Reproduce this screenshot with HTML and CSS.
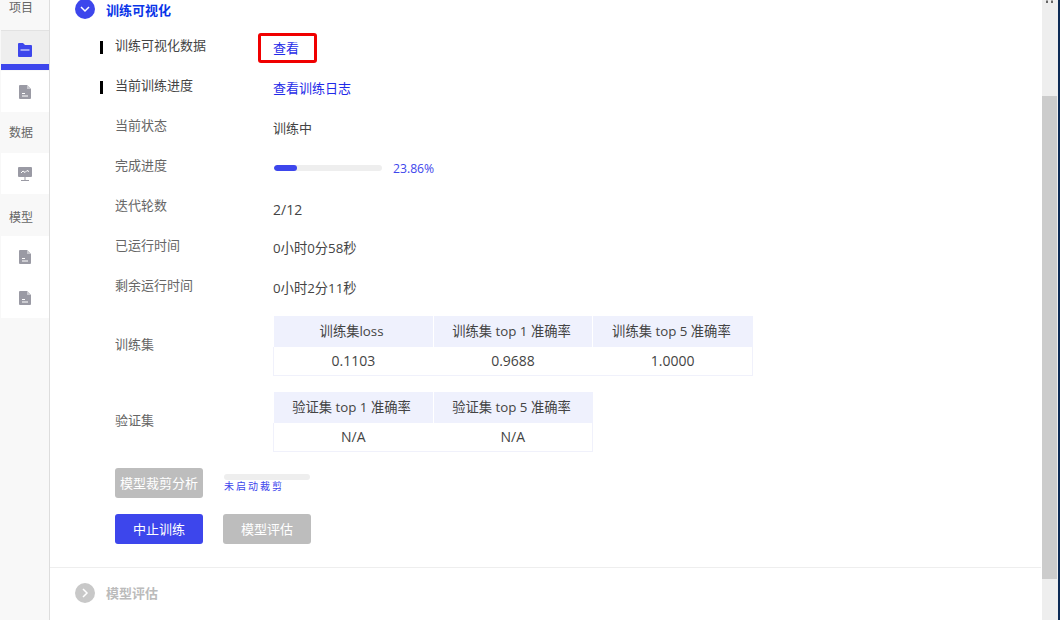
FILE: index.html
```html
<!DOCTYPE html>
<html lang="zh-CN">
<head>
    <meta charset="UTF-8">
    <meta name="viewport" content="width=device-width, initial-scale=1.0">
    <title>训练可视化</title>
    <link rel="stylesheet" href="styles.css">
</head>
<body>
    <div class="app">
        <div class="sidebar">
            <div class="side-label side-first">项目</div>
            <div class="side-item active">
                <svg width="14" height="14" viewBox="0 0 14 14"><path d="M0 1a1 1 0 0 1 1-1h4l2 2h6a1 1 0 0 1 1 1v10a1 1 0 0 1-1 1H1a1 1 0 0 1-1-1z" fill="#3d46ec"/><rect x="2.500" y="6.500" width="9" height="1" fill="#fff"/></svg>
            </div>
            <div class="side-item">
                <svg width="12" height="14" viewBox="0 0 12 14"><path d="M1 0h7l4 4v9a1 1 0 0 1-1 1H1a1 1 0 0 1-1-1V1a1 1 0 0 1 1-1z" fill="#9a9aa4"/><path d="M8 0l4 4H8z" fill="#c9c9cf"/><rect x="3" y="8" width="3" height="1" fill="#fff"/><rect x="3" y="10.500" width="6" height="1" fill="#fff"/></svg>
            </div>
            <div class="side-label">数据</div>
            <div class="side-item">
                <svg width="14" height="14" viewBox="0 0 14 14"><rect x="0" y="0" width="14" height="10" rx="1" fill="#9a9aa4"/><path d="M3 6l2-2 2 1.500 2-2 2 1" fill="none" stroke="#fff" stroke-width="1"/><rect x="6.500" y="10" width="1" height="3" fill="#9a9aa4"/><rect x="3" y="13" width="8" height="1" fill="#9a9aa4"/></svg>
            </div>
            <div class="side-label side-model">模型</div>
            <div class="side-item">
                <svg width="12" height="14" viewBox="0 0 12 14"><path d="M1 0h7l4 4v9a1 1 0 0 1-1 1H1a1 1 0 0 1-1-1V1a1 1 0 0 1 1-1z" fill="#9a9aa4"/><path d="M8 0l4 4H8z" fill="#c9c9cf"/><rect x="3" y="8" width="3" height="1" fill="#fff"/><rect x="3" y="10.500" width="6" height="1" fill="#fff"/></svg>
            </div>
            <div class="side-item">
                <svg width="12" height="14" viewBox="0 0 12 14"><path d="M1 0h7l4 4v9a1 1 0 0 1-1 1H1a1 1 0 0 1-1-1V1a1 1 0 0 1 1-1z" fill="#9a9aa4"/><path d="M8 0l4 4H8z" fill="#c9c9cf"/><rect x="3" y="8" width="3" height="1" fill="#fff"/><rect x="3" y="10.500" width="6" height="1" fill="#fff"/></svg>
            </div>
        </div>

        <div class="main">
            <div class="section-head">
                <span class="circle">
                    <svg width="12" height="12" viewBox="0 0 12 12"><path d="M2 4l4 4 4-4" fill="none" stroke="#fff" stroke-width="1.500"/></svg>
                </span>
                <span class="section-title">训练可视化</span>
            </div>

            <div class="row">
                <div class="label mark">训练可视化数据</div>
                <div class="value"><a class="link boxed">查看</a></div>
            </div>
            <div class="row">
                <div class="label mark">当前训练进度</div>
                <div class="value"><a class="link">查看训练日志</a></div>
            </div>
            <div class="row">
                <div class="label">当前状态</div>
                <div class="value">训练中</div>
            </div>
            <div class="row">
                <div class="label">完成进度</div>
                <div class="value progress-wrap">
                    <div class="progress"><div class="progress-bar" style="width: 23px"></div></div>
                    <span class="percent">23.86%</span>
                </div>
            </div>
            <div class="row">
                <div class="label">迭代轮数</div>
                <div class="value value-num">2/12</div>
            </div>
            <div class="row">
                <div class="label">已运行时间</div>
                <div class="value value-time">0小时0分58秒</div>
            </div>
            <div class="row">
                <div class="label">剩余运行时间</div>
                <div class="value value-time">0小时2分11秒</div>
            </div>

            <div class="row row-table">
                <div class="label">训练集</div>
                <table class="table-3">
                    <tr><th>训练集loss</th><th>训练集 top 1 准确率</th><th>训练集 top 5 准确率</th></tr>
                    <tr><td>0.1103</td><td>0.9688</td><td>1.0000</td></tr>
                </table>
            </div>
            <div class="row row-table">
                <div class="label">验证集</div>
                <table class="table-2">
                    <tr><th>验证集 top 1 准确率</th><th>验证集 top 5 准确率</th></tr>
                    <tr><td>N/A</td><td>N/A</td></tr>
                </table>
            </div>

            <div class="actions">
                <button class="btn btn-off">模型裁剪分析</button>
                <div class="prune">
                    <div class="prune-bar"></div>
                    <div class="prune-text">未启动裁剪</div>
                </div>
            </div>
            <div class="actions actions-last">
                <button class="btn btn-primary">中止训练</button>
                <button class="btn btn-off">模型评估</button>
            </div>

            <div class="section-head section-off">
                <span class="circle">
                    <svg width="12" height="12" viewBox="0 0 12 12"><path d="M4 2l4 4-4 4" fill="none" stroke="#fff" stroke-width="1.500"/></svg>
                </span>
                <span class="section-title">模型评估</span>
            </div>
        </div>

        <div class="scrollbar">
            <svg class="scroll-arrow" width="7" height="3" viewBox="0 0 7 3"><path d="M0 3V1l1-1 1 1v2zM5 3V1l1-1 1 1v2z" fill="#666"/></svg>
            <div class="scroll-thumb"></div>
        </div>
        <div class="edge"></div>
    </div>
</body>
</html>
```

FILE: styles.css
```css
body {
    margin: 0;
    font-family: "Open Sans", "Noto Sans CJK SC", sans-serif;
    font-size: 13px;
    color: #444;
    background: #fff;
}

.app {
    display: flex;
    height: 620px;
    overflow: hidden;
}

/* left nav */
.sidebar {
    width: 49px;
    flex-shrink: 0;
    background: #f8f8f8;
    border-right: 1px solid #ddd;
}

.side-label {
    height: 41px;
    line-height: 42px;
    padding-left: 9px;
    font-size: 12px;
    color: #666;
}

.side-first {
    height: 30px;
    line-height: 16px;
}

.side-model {
    height: 42px;
    line-height: 48px;
}

.side-item {
    height: 41px;
    background: #fff;
    margin-left: 1px;
    display: flex;
    align-items: center;
    justify-content: center;
    box-sizing: border-box;
}

.side-item.active {
    background: #eee;
    height: 40px;
    margin-bottom: 1px;
    padding-top: 5px;
    border-bottom: 6px solid #3d46ec;
    border-top: 1px solid #e2e2e2;
}

/* main panel */
.main {
    flex: 1;
    min-width: 0;
}

.section-head {
    display: flex;
    align-items: center;
    gap: 11px;
    height: 20px;
    margin-top: -1px;
    padding-left: 25px;
}

.circle {
    width: 20px;
    height: 20px;
    border-radius: 50%;
    background: #3d46ec;
    display: flex;
    align-items: center;
    justify-content: center;
}

.section-title {
    font-size: 13px;
    font-weight: 700;
    color: #0a35e8;
}

.section-off {
    border-top: 1px solid #eee;
    height: 50px;
    margin-top: 0;
    margin-right: 1px;
}

.section-off .circle {
    background: #c8c8c8;
}

.section-off .section-title {
    margin-top: -2px;
    color: #bbb;
}

.row {
    display: flex;
    height: 40px;
    padding-left: 50px;
}

.row:nth-child(2) {
    margin-top: 17px;
}

.label {
    width: 173px;
    flex-shrink: 0;
    display: flex;
    gap: 12px;
    margin-top: -1px;
    line-height: 20px;
    color: #666;
}

.label::before {
    content: "";
    width: 3px;
    height: 13px;
    margin-top: 6px;
}

.label.mark {
    color: #444;
}

.label.mark::before {
    background: #000;
}

.value {
    padding-top: 2px;
    line-height: 20px;
    color: #444;
}

.value-num {
    padding-top: 4px;
    font-size: 14px;
}

.value-time {
    font-size: 13.3px;
}

.link {
    color: #1f2be8;
}

.boxed {
    position: relative;
    display: inline-block;
}

.boxed::after {
    content: "";
    position: absolute;
    left: -15px;
    top: -5px;
    width: 53px;
    height: 24px;
    border: 3px solid #f00000;
    border-radius: 3px;
}

.progress-wrap {
    display: flex;
    align-items: center;
    gap: 11px;
    height: 20px;
}

.progress {
    width: 108px;
    height: 6px;
    margin-left: 1px;
    border-radius: 3px;
    background: #eee;
    overflow: hidden;
}

.progress-bar {
    height: 6px;
    border-radius: 3px;
    background: #3d46ec;
}

.percent {
    margin-top: 2px;
    font-size: 12.2px;
    color: #3d46ec;
}

.row-table {
    height: 76px;
}

.row-table .label {
    margin-top: 18px;
}

table {
    border-collapse: collapse;
    table-layout: fixed;
    height: 59px;
}

.table-3 {
    width: 480px;
}

.table-2 {
    width: 320px;
}

th {
    height: 31px;
    padding: 0 3px 2px 0;
    box-sizing: border-box;
    background: #eff1fd;
    border-right: 1px solid #fff;
    font-weight: 400;
    font-size: 13.3px;
    white-space: nowrap;
    color: #444;
}

th:last-child {
    border-right: 0;
}

td {
    height: 28px;
    padding: 0 0 1px;
    box-sizing: border-box;
    text-align: center;
    font-size: 14px;
    border-bottom: 1px solid #f0f1fb;
    border-left: 1px solid #f0f1fb;
    border-right: 1px solid #f0f1fb;
    color: #444;
}

tr td:not(:last-child) {
    border-right-color: #fff;
}

.actions {
    display: flex;
    gap: 20px;
    padding-left: 65px;
}

.actions-last {
    margin-top: 16px;
    margin-bottom: 23px;
}

.btn {
    width: 88px;
    height: 30px;
    padding: 0 0 2px;
    border: 0;
    border-radius: 3px;
    font-family: inherit;
    font-size: 13px;
    color: #fff;
}

.btn-primary {
    background: #3d46ec;
}

.btn-off {
    background: #bdbdbd;
}

.prune {
    width: 86px;
    margin-left: 1px;
    padding-top: 6px;
}

.prune-bar {
    height: 6px;
    border-radius: 3px;
    background: #eee;
}

.prune-text {
    font-size: 10px;
    line-height: 12px;
    letter-spacing: 2px;
    white-space: nowrap;
    color: #3d46ec;
}

/* fake window scrollbar */
.scrollbar {
    width: 16px;
    flex-shrink: 0;
    background: #eee;
    position: relative;
}

.scroll-arrow {
    position: absolute;
    left: 4px;
    top: 0;
}

.scroll-thumb {
    width: 15px;
    height: 483px;
    margin-top: 96px;
    background: #ccc;
}

.edge {
    width: 2px;
    flex-shrink: 0;
    background: #0c2a55;
}
```
